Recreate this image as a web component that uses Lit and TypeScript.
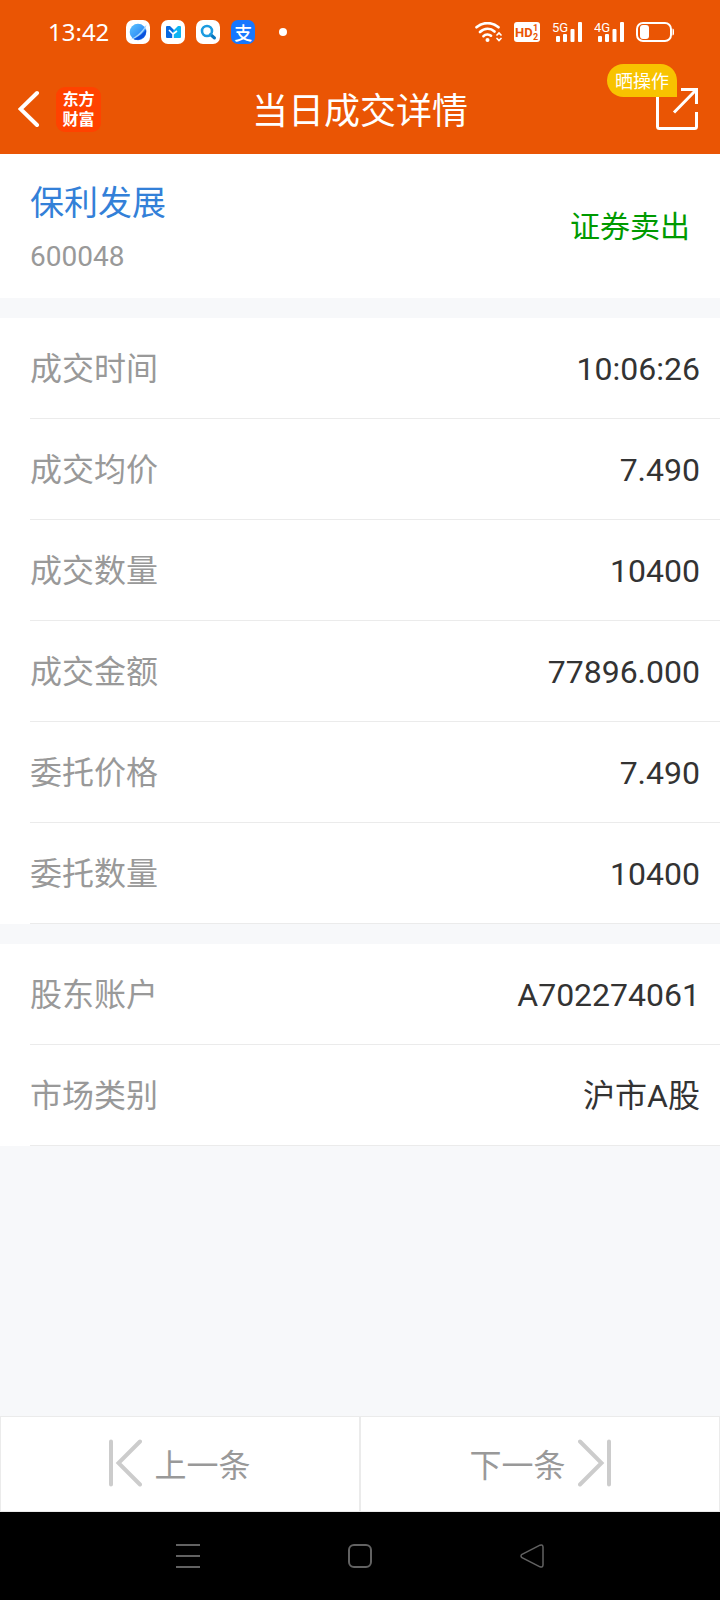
import { LitElement, html, css, svg } from "lit";
import { customElement, property } from "lit/decorators.js";

interface Entry {
  label: string;
  value: string;
}

const FONT = css`Roboto, "Noto Sans CJK SC", sans-serif`;

@customElement("status-bar")
export class StatusBar extends LitElement {
  static styles = css`
    :host {
      display: flex;
      align-items: center;
      justify-content: space-between;
      height: 64px;
      padding: 0 46px 0 48px;
      box-sizing: border-box;
      color: #fff;
    }
    .side {
      display: flex;
      align-items: center;
      gap: 12px;
    }
    .apps {
      display: flex;
      gap: 11px;
      margin: 0 12px 0 5px;
    }
    .time {
      font: 400 24px/32px "Noto Sans", sans-serif;
    }
    .app {
      display: flex;
      align-items: center;
      justify-content: center;
      width: 24px;
      height: 24px;
      border-radius: 7px;
      background: #fff;
      overflow: hidden;
    }
    .pay {
      background: #1677ff;
      font: 500 18px/24px "Noto Sans CJK SC", sans-serif;
    }
    .dot {
      width: 8px;
      height: 8px;
      border-radius: 50%;
      background: #fff;
    }
    svg {
      display: block;
    }
    .net {
      font: 400 13px Roboto, sans-serif;
    }
    .hd {
      font: 700 13px Roboto, sans-serif;
    }
    .sub {
      font: 700 9px Roboto, sans-serif;
    }
  `;

  private signal(name: string) {
    return html`<svg width="30" height="20" viewBox="0 0 30 20" fill="#fff">
      <text class="net" x="0" y="10">${name}</text>
      ${svg`<rect x="4" y="14" width="4" height="6" rx="1" /><rect x="11" y="12" width="4" height="8" rx="1" /><rect x="18.500" y="7" width="4" height="13" rx="1" /><rect x="26" y="0" width="4" height="20" rx="1" />`}
    </svg>`;
  }

  render() {
    return html`
      <div class="side">
        <span class="time">13:42</span>
        <div class="apps">
          <span class="app">
            <svg width="24" height="24" viewBox="0 0 24 24">
              <defs>
                <linearGradient id="planet" x1="0" y1="0" x2="1" y2="1">
                  <stop offset="0" stop-color="#5cc4ff" />
                  <stop offset="0.500" stop-color="#3a9bf8" />
                  <stop offset="1" stop-color="#1463e8" />
                </linearGradient>
              </defs>
              <circle cx="12" cy="12" r="8.300" fill="url(#planet)" />
              <path d="M3.500 19.500C7 19 16 12 20.500 4.500C20 10 12 19 3.500 19.500Z" fill="#9ed4ff" />
              <path d="M7.500 19.200C13 17 18.500 12 20.200 9.500C21 15 15.500 22 7.500 19.200Z" fill="#0a50dc" />
            </svg>
          </span>
          <span class="app">
            <svg width="24" height="24" viewBox="0 0 24 24">
              <path d="M5 7q0-1 1-1h3l4 4v8H6q-1 0-1-1z" fill="#0868e0" />
              <path d="M20 7q0-1-1-1h-2l-5 5v7h7q1 0 1-1z" fill="#0cb4f2" />
              <path d="M8 10l4 4v5M12 14l4-3" fill="none" stroke="#fff" stroke-width="1.600" />
            </svg>
          </span>
          <span class="app">
            <svg width="24" height="24" viewBox="0 0 24 24" fill="none" stroke-linecap="round">
              <path d="M14.500 14.500L18.500 18" stroke="#0878c0" stroke-width="3" />
              <circle cx="11" cy="11" r="5" stroke="#1c9be0" stroke-width="2.600" />
            </svg>
          </span>
          <span class="app pay">支</span>
        </div>
        <span class="dot"></span>
      </div>
      <div class="side">
        <svg width="27" height="20" viewBox="0 0 27 20" fill="none" stroke="#fff" stroke-width="2.600" stroke-linecap="round">
          <path d="M1.500 5.300C7.500-.300 17.500-.300 23.500 5.300M5 10C9.500 5.700 15.500 5.700 19.500 9.500M8.500 14.200C10.500 12 14 12 16 13.700" />
          <circle cx="12.500" cy="18" r="2" fill="#fff" stroke="none" />
          <path d="M22 13l2-2 2 2M22 16.500l2 2 2-2" stroke-width="1.700" />
        </svg>
        <svg width="26" height="20" viewBox="0 0 26 20">
          <rect width="26" height="20" rx="3" fill="#fff" />
          <text class="hd" x="1" y="15" fill="#ea5504">HD</text>
          <text class="sub" x="19" y="9" fill="#ea5504">1</text>
          <text class="sub" x="19" y="18" fill="#ea5504">2</text>
        </svg>
        ${this.signal("5G")} ${this.signal("4G")}
        <svg width="38" height="20" viewBox="0 0 38 20" fill="#fff">
          <rect x="1" y="1" width="34" height="18" rx="6" fill="none" stroke="#fff" stroke-width="2" />
          <rect x="4" y="3" width="9" height="14" rx="3" />
          <path d="M36.500 6.500q1.500 0 1.500 2v3q0 2-1.500 2z" />
        </svg>
      </div>
    `;
  }
}

@customElement("title-bar")
export class TitleBar extends LitElement {
  @property() heading = "";

  static styles = css`
    :host {
      display: grid;
      grid-template-columns: 1fr auto 1fr;
      align-items: center;
      height: 90px;
      padding: 0 18px;
      box-sizing: border-box;
      color: #fff;
      font-family: ${FONT};
    }
    .left {
      display: flex;
      align-items: center;
      gap: 16px;
    }
    button {
      display: block;
      padding: 0;
      border: 0;
      background: none;
      color: inherit;
      cursor: pointer;
    }
    .logo {
      width: 45px;
      height: 45px;
      padding: 1px 0;
      box-sizing: border-box;
      border-radius: 9px;
      background: #ff4200;
      font: 700 16px/20px "Noto Sans CJK SC", sans-serif;
      text-align: center;
    }
    .logo span {
      display: block;
    }
    h1 {
      margin: 0;
      padding-top: 6px;
      font-size: 36px;
      line-height: 48px;
      font-weight: 400;
    }
    .share {
      position: relative;
      justify-self: end;
      margin-right: 4px;
    }
    .badge {
      position: absolute;
      right: 21px;
      bottom: 33px;
      padding: 0 8px;
      border-radius: 17px 17px 0 17px;
      background: #f8c300;
      font: 400 18px/33px "Noto Sans CJK SC", sans-serif;
      white-space: nowrap;
    }
    svg {
      display: block;
    }
  `;

  render() {
    return html`
      <div class="left">
        <button aria-label="返回">
          <svg width="22" height="38" viewBox="0 0 22 38" fill="none" stroke="#fff" stroke-width="4" stroke-linecap="round">
            <path d="M19 3L2.500 19L19 35" />
          </svg>
        </button>
        <div class="logo"><span>东方</span><span>财富</span></div>
      </div>
      <h1>${this.heading}</h1>
      <button class="share">
        <svg width="42" height="42" viewBox="0 0 42 42" fill="none" stroke="#fff" stroke-width="3">
          <path d="M1.500 8V38.500Q1.500 40.500 3.500 40.500H38.500Q40.500 40.500 40.500 38.500V24" />
          <path d="M25 1.500H40.500V16M40 2L18 24.500" />
        </svg>
        <span class="badge">晒操作</span>
      </button>
    `;
  }
}

@customElement("detail-list")
export class DetailList extends LitElement {
  @property({ attribute: false }) entries: Entry[] = [];

  static styles = css`
    :host {
      display: block;
      background: #fff;
      font-family: ${FONT};
      font-size: 32px;
      line-height: 97px;
    }
    dl {
      margin: 0;
      padding-left: 30px;
    }
    .row {
      display: flex;
      justify-content: space-between;
      padding: 3px 20px 0 0;
      border-bottom: 1px solid #ebebeb;
    }
    dt {
      color: #999;
    }
    dd {
      margin: 0;
      color: #333;
    }
  `;

  render() {
    return html`<dl>
      ${this.entries.map(
        (e) => html`<div class="row"><dt>${e.label}</dt><dd>${e.value}</dd></div>`
      )}
    </dl>`;
  }
}

@customElement("app-root")
export class AppRoot extends LitElement {
  private trade: Entry[] = [
    { label: "成交时间", value: "10:06:26" },
    { label: "成交均价", value: "7.490" },
    { label: "成交数量", value: "10400" },
    { label: "成交金额", value: "77896.000" },
    { label: "委托价格", value: "7.490" },
    { label: "委托数量", value: "10400" },
  ];

  private account: Entry[] = [
    { label: "股东账户", value: "A702274061" },
    { label: "市场类别", value: "沪市A股" },
  ];

  static styles = css`
    :host {
      display: flex;
      flex-direction: column;
      min-height: 100vh;
      background: #f7f8fa;
      font-family: ${FONT};
    }
    header {
      background: #ea5504;
    }
    main {
      flex: 1;
      display: flex;
      flex-direction: column;
      gap: 20px;
    }
    .stock {
      display: flex;
      justify-content: space-between;
      align-items: center;
      padding: 19px 30px 17px;
      background: #fff;
    }
    h2,
    p {
      margin: 0;
      font-weight: 400;
    }
    h2 {
      color: #3380d8;
      font-size: 34px;
      line-height: 60px;
    }
    .code {
      color: #999;
      font-size: 28px;
      line-height: 48px;
    }
    .side {
      color: #009a00;
      font-size: 30px;
      line-height: 48px;
    }
    button {
      padding: 0;
      border: 0;
      background: none;
      font: inherit;
      cursor: pointer;
    }
    .pager {
      display: grid;
      grid-template-columns: 1fr 1fr;
    }
    .step {
      display: flex;
      align-items: center;
      justify-content: center;
      gap: 12px;
      height: 96px;
      padding-bottom: 2px;
      border: 1px solid #ebebeb;
      background: #fff;
      color: #999;
      font-size: 32px;
    }
    .system {
      display: grid;
      grid-template-columns: repeat(3, 1fr);
      height: 88px;
      padding: 0 102px;
      background: #000;
    }
    .key {
      display: flex;
      align-items: center;
      justify-content: center;
    }
    svg {
      display: block;
    }
  `;

  render() {
    return html`
      <header>
        <status-bar></status-bar>
        <title-bar heading="当日成交详情"></title-bar>
      </header>
      <main>
        <section class="stock">
          <div>
            <h2>保利发展</h2>
            <p class="code">600048</p>
          </div>
          <p class="side">证券卖出</p>
        </section>
        <detail-list .entries=${this.trade}></detail-list>
        <detail-list .entries=${this.account}></detail-list>
      </main>
      <div class="pager">
        <button class="step">
          <svg width="33" height="48" viewBox="0 0 33 48" fill="none" stroke="#ccc" stroke-width="4" stroke-linecap="round">
            <path d="M2 2.500V45.500M31 2.500L9.500 24L31 45.500" />
          </svg>
          <span>上一条</span>
        </button>
        <button class="step">
          <span>下一条</span>
          <svg width="33" height="48" viewBox="0 0 33 48" fill="none" stroke="#ccc" stroke-width="4" stroke-linecap="round">
            <path d="M31 2.500V45.500M2 2.500L23.500 24L2 45.500" />
          </svg>
        </button>
      </div>
      <nav class="system">
        <button class="key" aria-label="菜单">
          <svg width="24" height="24" viewBox="0 0 24 24" stroke="#626262" stroke-width="2">
            <path d="M0 1H24M0 12H24M0 23H24" />
          </svg>
        </button>
        <button class="key" aria-label="主页">
          <svg width="24" height="24" viewBox="0 0 24 24" fill="none" stroke="#626262" stroke-width="2">
            <rect x="1" y="1" width="22" height="22" rx="5" />
          </svg>
        </button>
        <button class="key" aria-label="返回">
          <svg width="24" height="24" viewBox="0 0 24 24" fill="none" stroke="#626262" stroke-width="1.500">
            <path d="M2 10.300L20 1.200Q22.800.200 23 3V21Q22.800 23.800 20 22.800L2 13.700Q0 12 2 10.300Z" />
          </svg>
        </button>
      </nav>
    `;
  }
}
